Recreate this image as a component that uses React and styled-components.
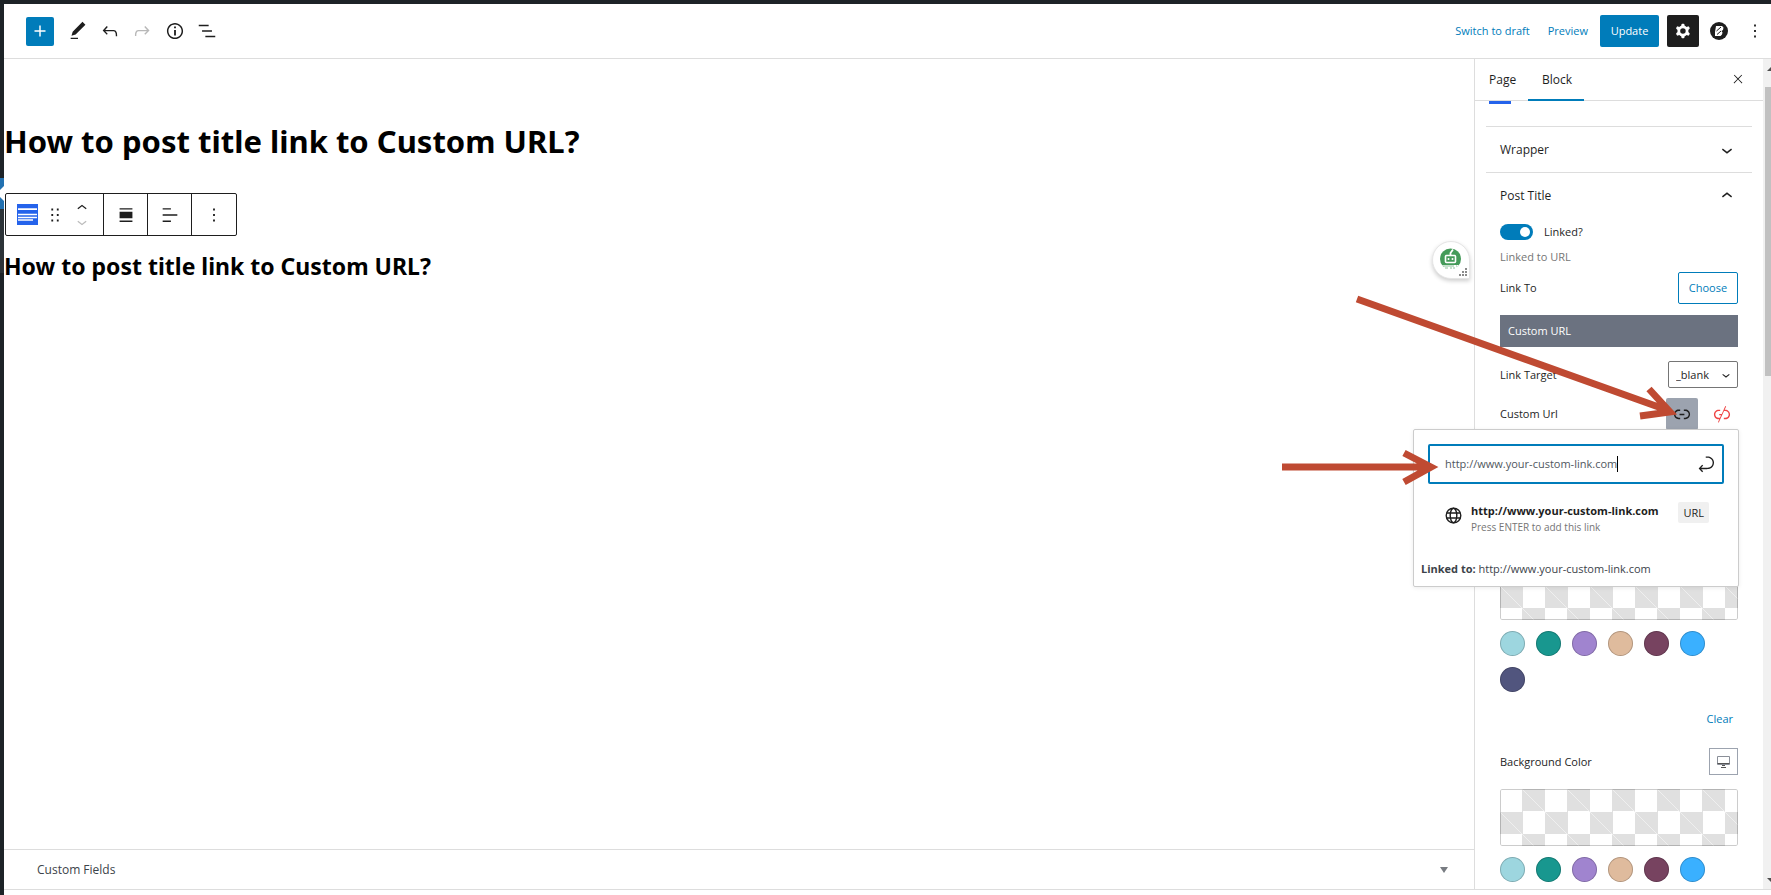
import React, { useState } from "react";
import styled, { createGlobalStyle } from "styled-components";

const blue = "#007cba";
const ink = "#1e1e1e";
const line = "#dddddd";

const GlobalStyle = createGlobalStyle`
  *, *::before, *::after { box-sizing: border-box; }
  body {
    margin: 0;
    background: #fff;
    color: ${ink};
    font: 11px/16px "Open Sans", "Noto Sans", sans-serif;
  }
  button, input, select { font: inherit; color: inherit; margin: 0; }
  h1, h2, p { margin: 0; }
`;

const Shell = styled.div`
  position: relative;
  display: flex;
  flex-direction: column;
  height: 100vh;
  overflow: hidden;
  border-top: 4px solid #1d2327;
`;

const Frame = styled.div`
  flex: 1;
  min-height: 0;
  display: flex;
`;

const AdminRail = styled.div`
  flex: none;
  width: 4px;
  background: #1d2327;
  display: flex;
  flex-direction: column;
`;

const RailCurrent = styled.svg`
  display: block;
  width: 4px;
  height: 31px;
  margin-top: 174px;
`;

const RailSubmenu = styled.div`
  height: 64px;
  background: #2c3338;
`;

const Main = styled.div`
  flex: 1;
  min-width: 0;
  display: flex;
  flex-direction: column;
  padding-bottom: 5px;
`;

const Header = styled.header`
  flex: none;
  height: 55px;
  display: flex;
  align-items: center;
  justify-content: space-between;
  border-bottom: 1px solid ${line};
  padding-left: 22px;
`;

const Tools = styled.div`
  display: flex;
  align-items: center;
  gap: ${(p) => p.$gap || 0}px;
`;

const IconButton = styled.button`
  flex: none;
  display: flex;
  align-items: center;
  justify-content: center;
  width: ${(p) => p.$w || 32}px;
  height: ${(p) => p.$h || 32}px;
  padding: 0;
  border: 0;
  border-radius: ${(p) => p.$radius || 0}px;
  background: ${(p) => p.$bg || "none"};
  color: ${(p) => p.$color || ink};
  & > svg { flex: none; }
`;

const TextLink = styled.a`
  color: ${blue};
  text-decoration: none;
`;

const HeaderActions = styled.div`
  display: flex;
  align-items: center;
`;

const HeaderLink = styled(TextLink)`
  margin-right: ${(p) => p.$after}px;
`;

const UpdateButton = styled.button`
  width: 59px;
  height: 32px;
  margin-right: 8px;
  padding: 0;
  border: 0;
  border-radius: 2px;
  background: ${blue};
  color: #fff;
`;

const Columns = styled.div`
  flex: 1;
  min-height: 0;
  display: flex;
  border-bottom: 1px solid ${line};
`;

const Editor = styled.main`
  position: relative;
  flex: 1;
  min-width: 0;
  display: flex;
  flex-direction: column;
`;

const Canvas = styled.div`
  flex: 1;
  padding-top: 60px;
  font-family: "Noto Sans", "Open Sans", sans-serif;
  color: #000;
`;

const PageTitle = styled.h1`
  font-size: 31px;
  line-height: 44px;
  font-weight: 700;
`;

const BlockTitle = styled.h2`
  margin-top: 14px;
  font-size: 23px;
  line-height: 32px;
  font-weight: 700;
`;

const BlockToolbar = styled.div`
  display: flex;
  width: max-content;
  height: 43px;
  margin: 30px 0 0 1px;
  border: 1px solid ${ink};
  border-radius: 2px;
`;

const ToolGroup = styled.div`
  display: flex;
  align-items: center;
  justify-content: center;
  width: ${(p) => p.$w}px;
  & + & { border-left: 1px solid ${ink}; }
`;

const Movers = styled.div`
  display: flex;
  flex-direction: column;
`;

const MetaBox = styled.button`
  display: flex;
  align-items: center;
  justify-content: space-between;
  height: 40px;
  padding: 0 26px 0 33px;
  border: 0;
  border-top: 1px solid ${line};
  background: #fff;
  color: #3c434a;
  font-size: 12px;
`;

const Assistant = styled.button`
  position: absolute;
  top: 182px;
  right: 4px;
  width: 38px;
  height: 38px;
  padding: 0;
  border: 1px solid #e6e6e6;
  border-radius: 19px 19px 0 19px;
  background: #fff;
  box-shadow: 0 2px 4px rgba(0, 0, 0, 0.2);
`;

const Sidebar = styled.aside`
  flex: none;
  width: 289px;
  border-left: 1px solid ${line};
  display: flex;
  flex-direction: column;
`;

const Tabs = styled.div`
  flex: none;
  display: flex;
  align-items: stretch;
  height: 42px;
  border-bottom: 1px solid ${line};
`;

const Tab = styled.button`
  height: 42px;
  padding: 0 14px;
  width: ${(p) => p.$w}px;
  border: 0;
  background: none;
  text-align: left;
  white-space: nowrap;
  font-size: 12px;
  box-shadow: ${(p) => (p.$active ? `inset 0 -2px 0 ${blue}` : "none")};
`;

const CloseSlot = styled.div`
  margin-left: auto;
  padding: 4px 9px 0 0;
`;

const Body = styled.div`
  flex: 1;
  min-height: 0;
  padding: 0 11px;
`;

const ScrolledTab = styled.div`
  width: 22px;
  height: 3px;
  margin: 0 0 22px 3px;
  background: #2563eb;
`;

const PanelToggle = styled.button`
  display: flex;
  align-items: center;
  justify-content: space-between;
  width: 100%;
  height: 46px;
  padding: 0 14px;
  border: 0;
  border-top: 1px solid ${line};
  background: none;
  font-size: 12px;
`;

const Controls = styled.div`
  position: relative;
  padding: 0 14px;
`;

const Row = styled.div`
  display: flex;
  align-items: center;
  justify-content: space-between;
  height: ${(p) => p.$h}px;
  margin-top: ${(p) => p.$top}px;
`;

const SwitchRow = styled.label`
  display: flex;
  align-items: center;
  gap: 11px;
  height: 20px;
  margin-top: 4px;
`;

const Switch = styled.input.attrs({ type: "checkbox" })`
  appearance: none;
  width: 33px;
  height: 16px;
  border-radius: 8px;
  background: #949494;
  display: flex;
  align-items: center;
  padding: 0 3px;
  &::before {
    content: "";
    width: 10px;
    height: 10px;
    border-radius: 50%;
    background: #fff;
  }
  &:checked { background: ${blue}; justify-content: flex-end; }
`;

const Help = styled.p`
  margin-top: 7px;
  color: #757575;
`;

const ChooseButton = styled.button`
  width: 60px;
  height: 32px;
  padding: 0;
  border: 1px solid ${blue};
  border-radius: 2px;
  background: #fff;
  color: ${blue};
`;

const Chosen = styled.div`
  height: 32px;
  margin-top: 11px;
  padding: 0 8px;
  line-height: 32px;
  background: #6b7280;
  color: #fff;
`;

const SelectWrap = styled.span`
  display: grid;
  width: 70px;
  height: 27px;
  align-items: center;
  justify-items: end;
  & > * { grid-area: 1 / 1; }
  & > svg { pointer-events: none; margin-right: 4px; }
`;

const Select = styled.select`
  appearance: none;
  width: 100%;
  height: 100%;
  padding: 0 7px;
  border: 1px solid #757575;
  border-radius: 2px;
  background: #fff;
`;

const Popover = styled.div`
  position: absolute;
  top: 207px;
  right: 13px;
  width: 326px;
  height: 158px;
  padding: 14px;
  border: 1px solid #cccccc;
  border-radius: 2px;
  background: #fff;
  box-shadow: 0 1px 4px rgba(0, 0, 0, 0.08);
`;

const UrlField = styled.label`
  display: flex;
  align-items: center;
  height: 40px;
  padding: 0 4px 0 15px;
  border: 2px solid ${blue};
  border-radius: 2px;
  color: #50575e;
  & > button { margin-left: auto; }
`;

const UrlInput = styled.input`
  field-sizing: content;
  padding: 0;
  border: 0;
  outline: 0;
  background: none;
`;

const Caret = styled.span`
  width: 1px;
  height: 16px;
  background: #000;
`;

const Suggestion = styled.button`
  display: flex;
  align-items: flex-start;
  width: 100%;
  margin-top: 18px;
  padding: 0 15px 0 17px;
  border: 0;
  background: none;
  text-align: left;
  & > svg { margin-top: 5px; }
`;

const SuggestionText = styled.span`
  flex: 1;
  margin-left: 9px;
  display: flex;
  flex-direction: column;
  font-weight: 700;
  padding-top: 1px;
`;

const SuggestionHint = styled.small`
  color: #757575;
  font-size: 10px;
  font-weight: 400;
`;

const Kind = styled.span`
  padding: 0 5px;
  border-radius: 2px;
  background: #f0f0f0;
  line-height: 21px;
`;

const LinkedTo = styled.p`
  margin: 26px 0 0 -7px;
  color: #3c434a;
`;

const Checker = styled.div`
  height: 57px;
  margin-top: ${(p) => p.$top}px;
  border-radius: 2px;
  box-shadow: inset 0 0 0 1px rgba(0, 0, 0, 0.2);
  background:
    linear-gradient(45deg, transparent 49%, #efefef 50%, transparent 51%) 22px 0 / 45px 45px,
    conic-gradient(#e0e0e0 25%, #fff 0 50%, #e0e0e0 0 75%, #fff 0) 0 0 / 45px 45px;
`;

const Swatches = styled.div`
  display: flex;
  flex-wrap: wrap;
  gap: 11px;
  margin-top: 11px;
`;

const Swatch = styled.button`
  width: 25px;
  height: 25px;
  padding: 0;
  border: 0;
  border-radius: 50%;
  background: ${(p) => p.$color};
  box-shadow: inset 0 0 0 1px rgba(0, 0, 0, 0.2);
`;

const ClearButton = styled.button`
  padding: 0 5px;
  border: 0;
  background: none;
  color: ${blue};
`;

const DeviceButton = styled(IconButton)`
  border: 1px solid #9ca3af;
`;

const Scrollbar = styled.div`
  flex: none;
  width: 8px;
  background: #f1f1f1;
  display: flex;
  flex-direction: column;
  align-items: flex-end;
  padding: 8px 0 7px;
`;

const Thumb = styled.div`
  width: 6px;
  height: 289px;
  margin: 16px 0 auto;
  background: #c1c1c1;
`;

const Annotations = styled.svg`
  position: absolute;
  top: 286px;
  right: 85px;
  pointer-events: none;
`;

const paths = {
  plus: "M18 11.2h-5.2V6h-1.6v5.2H6v1.6h5.2V18h1.6v-5.2H18z",
  edit: "M20.1 5.1L16.9 2 6.2 12.7l-1.3 4.4 4.5-1.3L20.1 5.1zM4 20.8h8v-1.5H4v1.5z",
  undo: "M18.3 11.7c-.6-.6-1.4-.9-2.3-.9H6.7l2.9-3.3-1.1-1-4.5 5L8.5 16l1-1-2.7-2.7H16c.5 0 .9.2 1.3.5 1 1 1 3.4 1 4.5v.3h1.5v-.2c0-1.5 0-4.3-1.5-5.7z",
  redo: "M15.6 6.5l-1.1 1 2.9 3.3H8c-.9 0-1.7.3-2.3.9-1.4 1.5-1.4 4.2-1.4 5.6v.2h1.5v-.3c0-1.1 0-3.5 1-4.5.3-.3.7-.5 1.3-.5h9.2L14.5 15l1.1 1.1 4.6-4.6-4.6-5z",
  info: "M12 3.2c-4.8 0-8.8 3.9-8.8 8.8 0 4.8 3.9 8.8 8.8 8.8 4.8 0 8.8-3.9 8.8-8.8 0-4.8-4-8.8-8.8-8.8zm0 16c-4 0-7.2-3.3-7.2-7.2C4.8 8 8 4.8 12 4.8s7.2 3.3 7.2 7.2c0 4-3.2 7.2-7.2 7.2zM11 17h2v-6h-2v6zm0-8h2V7h-2v2z",
  list: "M13.8 5.2H3v1.5h10.8V5.2zm-3.6 12v1.5H21v-1.5H10.2zm7.2-6H6.6v1.5h10.8v-1.5z",
  cog: "M10.289 4.836A1 1 0 0111.275 4h1.306a1 1 0 01.987.836l.244 1.466c.787.26 1.503.679 2.108 1.218l1.393-.522a1 1 0 011.216.437l.653 1.13a1 1 0 01-.23 1.273l-1.148.944a6.025 6.025 0 010 2.435l1.149.946a1 1 0 01.23 1.272l-.653 1.13a1 1 0 01-1.216.437l-1.394-.522c-.605.54-1.32.958-2.108 1.218l-.244 1.466a1 1 0 01-.987.836h-1.306a1 1 0 01-.986-.836l-.244-1.466a5.995 5.995 0 01-2.108-1.218l-1.394.522a1 1 0 01-1.217-.436l-.653-1.131a1 1 0 01.23-1.272l1.149-.946a6.026 6.026 0 010-2.435l-1.148-.944a1 1 0 01-.23-1.272l.653-1.131a1 1 0 011.217-.437l1.393.522a5.994 5.994 0 012.108-1.218l.244-1.466zM14.929 12a3 3 0 11-6 0 3 3 0 016 0z",
  more: "M13 19h-2v-2h2v2zm0-6h-2v-2h2v2zm0-6h-2V5h2v2z",
  down: "M17.5 11.6L12 16l-5.5-4.4.9-1.2L12 14l4.5-3.6 1 1.2z",
  up: "M6.5 12.4L12 8l5.5 4.4-.9 1.2L12 10l-4.5 3.6-1-1.2z",
  close: "M13 11.8l6.1-6.3-1-1-6.1 6.2-6.1-6.2-1 1 6.1 6.3-6.5 6.7 1 1 6.5-6.6 6.5 6.6 1-1z",
  drag: "M8 7h2V5H8v2zm0 6h2v-2H8v2zm0 6h2v-2H8v2zm6-14v2h2V5h-2zm0 8h2v-2h-2v2zm0 6h2v-2h-2v2z",
  alignBlock: "M5 4.5h14V6H5zM5 8.5h14v7H5zM5 18h14v1.5H5z",
  alignText: "M4 4.5h9V6H4zM4 11.2h16v1.5H4zM4 18h9v1.5H4z",
  link: "M15.6 7.2H14v1.5h1.6c2 0 3.7 1.7 3.7 3.7s-1.7 3.7-3.7 3.7H14v1.5h1.6c2.8 0 5.2-2.3 5.2-5.2 0-2.9-2.3-5.2-5.2-5.2zM4.7 12.4c0-2 1.7-3.7 3.7-3.7H10V7.2H8.4c-2.9 0-5.2 2.3-5.2 5.2 0 2.9 2.3 5.2 5.2 5.2H10v-1.5H8.4c-2 0-3.7-1.7-3.7-3.7zm4.6.9h5.3v-1.5H9.3v1.5z",
  unlink: "M15.6 7.3h-.7l1.6-3.5-.9-.4-3.9 8.5H9v1.5h2l-1.3 2.8H8.4c-2 0-3.7-1.7-3.7-3.7s1.7-3.7 3.7-3.7H10V7.3H8.4c-2.9 0-5.2 2.3-5.2 5.2 0 2.9 2.3 5.2 5.2 5.2H9l-1.4 3.2.9.4 5.7-12.5h1.4c2 0 3.7 1.7 3.7 3.7s-1.7 3.7-3.7 3.7H14v1.5h1.6c2.9 0 5.2-2.3 5.2-5.2 0-2.9-2.4-5.2-5.2-5.2z",
  enter: "M6.734 16.106l2.176-2.38-1.093-1.028-3.846 4.158 3.846 4.157 1.093-1.027-2.176-2.38h2.811c1.125 0 2.25.03 3.374 0 1.428-.001 3.362-.25 4.963-1.277 1.66-1.065 2.868-2.906 2.868-5.859 0-2.479-1.327-4.896-3.65-5.93-1.82-.813-3.044-.8-4.806-.788l-.567.002v1.5c.184 0 .368 0 .553-.002 1.82-.007 2.704-.014 4.21.657 1.854.827 2.76 2.657 2.76 4.561 0 2.472-.973 3.824-2.178 4.596-1.258.807-2.864 1.04-4.163 1.04h-.02c-1.115.03-2.229 0-3.344 0H6.734z",
};

const Icon = ({ name, size = 22 }) => (
  <svg width={size} height={size} viewBox="0 0 24 24" fill="currentColor" fillRule="evenodd" aria-hidden="true">
    <path d={paths[name]} />
  </svg>
);

const palette = [
  ["Aqua", "#9dd6df"],
  ["Teal", "#18978f"],
  ["Lavender", "#a084cf"],
  ["Sand", "#dfbb9d"],
  ["Plum", "#774360"],
  ["Sky", "#3ab0ff"],
  ["Indigo", "#51557e"],
];

const Palette = ({ colors }) => (
  <Swatches>
    {colors.map(([name, value]) => (
      <Swatch key={name} aria-label={name} $color={value} />
    ))}
  </Swatches>
);

const TopBar = () => (
  <Header>
    <Tools>
      <IconButton $w={28} $h={29} $radius={2} $bg={blue} $color="#fff" aria-label="Add block"><Icon name="plus" /></IconButton>
      <IconButton $w={48} aria-label="Edit"><Icon name="edit" /></IconButton>
      <IconButton $w={16} aria-label="Undo"><Icon name="undo" /></IconButton>
      <IconButton $w={48} $color="#b8b8b8" aria-label="Redo"><Icon name="redo" /></IconButton>
      <IconButton $w={18} aria-label="Details"><Icon name="info" /></IconButton>
      <IconButton $w={46} aria-label="List view"><Icon name="list" /></IconButton>
    </Tools>
    <HeaderActions>
      <HeaderLink href="#draft" $after={18}>Switch to draft</HeaderLink>
      <HeaderLink href="#preview" $after={12}>Preview</HeaderLink>
      <UpdateButton>Update</UpdateButton>
      <IconButton $bg={ink} $color="#fff" $radius={2} aria-label="Settings"><Icon name="cog" /></IconButton>
      <IconButton $w={40} aria-label="Blocks plugin">
        <svg width="18" height="18" viewBox="0 0 18 18" aria-hidden="true">
          <circle cx="9" cy="9" r="9" fill={ink} />
          <path d="M6 4h6l1.500 1.500-.5 2.500-1.500 1 1 1.500-.5 2L10.500 14H5V10z" fill="#fff" />
          <path d="M6.500 9L11 5M7 12.500L11 9" stroke={ink} strokeWidth="1" />
        </svg>
      </IconButton>
      <IconButton $w={32} aria-label="Options"><Icon name="more" /></IconButton>
    </HeaderActions>
  </Header>
);

const Toolbar = () => (
  <BlockToolbar role="toolbar" aria-label="Block tools">
    <ToolGroup $w={97}>
      <IconButton $w={28} aria-label="Post title">
        <svg width="21" height="21" viewBox="0 0 21 21" aria-hidden="true">
          <rect width="21" height="21" fill="#2563eb" />
          <path d="M1 5h19M1 10.500h19M1 13.500h19M1 16h15" stroke="#fff" strokeWidth="1.400" />
          <path d="M1 5.500h19" stroke="#fff" />
        </svg>
      </IconButton>
      <IconButton $w={26} aria-label="Drag"><Icon name="drag" /></IconButton>
      <Movers>
        <IconButton $w={28} $h={14} aria-label="Move up"><Icon name="up" size={20} /></IconButton>
        <IconButton $w={28} $h={14} $color="#bbb" aria-label="Move down"><Icon name="down" size={20} /></IconButton>
      </Movers>
    </ToolGroup>
    <ToolGroup $w={44}><IconButton aria-label="Align"><Icon name="alignBlock" /></IconButton></ToolGroup>
    <ToolGroup $w={44}><IconButton aria-label="Text align"><Icon name="alignText" /></IconButton></ToolGroup>
    <ToolGroup $w={45}><IconButton aria-label="Options"><Icon name="more" /></IconButton></ToolGroup>
  </BlockToolbar>
);

const Robot = () => (
  <svg width="36" height="36" viewBox="0 0 36 36" aria-hidden="true">
    <circle cx="17.500" cy="17" r="10.500" fill="#459b5a" />
    <path d="M17.500 13v-2l2.500-3.500" stroke="#fff" strokeWidth="1.800" fill="none" />
    <rect x="12.500" y="13.500" width="10" height="7" rx="1" fill="none" stroke="#fff" strokeWidth="1.600" />
    <circle cx="15.500" cy="17" r="1" fill="#fff" />
    <circle cx="19.500" cy="17" r="1" fill="#fff" />
    <path d="M9 23h17l-4 5h-9z" fill="#fff" />
    <path d="M10 24h11m2 0h1M12 26h3m2 0h2m1 0h2" stroke="#8cc29a" />
    <path d="M32 26h2v2h-2zM29 29h2v2h-2zM32 29h2v2h-2zM26 32h2v2h-2zM29 32h2v2h-2zM32 32h2v2h-2z" fill="#8b8b8b" />
  </svg>
);

const LinkPopover = ({ url, setUrl }) => (
  <Popover role="dialog" aria-label="Edit link">
    <UrlField>
      <UrlInput aria-label="URL" value={url} onChange={(e) => setUrl(e.target.value)} />
      <Caret />
      <IconButton $w={24} $h={24} aria-label="Submit"><Icon name="enter" size={22} /></IconButton>
    </UrlField>
    <Suggestion>
      <svg width="17" height="17" viewBox="0 0 17 17" fill="none" stroke={ink} strokeWidth="1.400" aria-hidden="true">
        <circle cx="8.500" cy="8.500" r="7.300" />
        <ellipse cx="8.500" cy="8.500" rx="3.300" ry="7.300" />
        <path d="M1.800 6h13.400M1.800 11h13.400" />
      </svg>
      <SuggestionText>
        {url}
        <SuggestionHint>Press ENTER to add this link</SuggestionHint>
      </SuggestionText>
      <Kind>URL</Kind>
    </Suggestion>
    <LinkedTo><b>Linked to:</b> {url}</LinkedTo>
  </Popover>
);

const Settings = () => {
  const [url, setUrl] = useState("http://www.your-custom-link.com");
  const [linked, setLinked] = useState(true);
  return (
    <Sidebar>
      <Tabs>
        <Tab $w={53}>Page</Tab>
        <Tab $w={56} $active>Block</Tab>
        <CloseSlot><IconButton aria-label="Close settings"><Icon name="close" size={14} /></IconButton></CloseSlot>
      </Tabs>
      <Body>
        <ScrolledTab />
        <PanelToggle>Wrapper<Icon name="down" /></PanelToggle>
        <PanelToggle aria-expanded="true">Post Title<Icon name="up" /></PanelToggle>
        <Controls>
          <SwitchRow>
            <Switch checked={linked} onChange={(e) => setLinked(e.target.checked)} />
            Linked?
          </SwitchRow>
          <Help>Linked to URL</Help>
          <Row $h={32} $top={7}>Link To<ChooseButton>Choose</ChooseButton></Row>
          <Chosen>Custom URL</Chosen>
          <Row $h={27} $top={14}>
            <label htmlFor="target">Link Target</label>
            <SelectWrap>
              <Select id="target" defaultValue="_blank"><option>_blank</option><option>_self</option></Select>
              <Icon name="down" size={16} />
            </SelectWrap>
          </Row>
          <Row $h={32} $top={10}>
            Custom Url
            <Tools $gap={8}>
              <IconButton $bg="#9ca3af" $radius={2} aria-label="Edit link"><Icon name="link" /></IconButton>
              <IconButton $color="#ef4444" aria-label="Remove link"><Icon name="unlink" /></IconButton>
            </Tools>
          </Row>
          <Checker $top={133} />
          <Palette colors={palette} />
          <Row $h={18} $top={18}><span /><ClearButton>Clear</ClearButton></Row>
          <Row $h={27} $top={20}>
            Background Color
            <DeviceButton $w={29} $h={27} aria-label="Desktop">
              <svg width="13" height="12" viewBox="0 0 13 12" fill="none" aria-hidden="true">
                <path d="M.5.5h12v8H.5z" stroke="#8a8f98" />
                <path d="M.5 7.500h12M4 11.500h5M5 9.500h3" stroke="#555" />
              </svg>
            </DeviceButton>
          </Row>
          <Checker $top={14} />
          <Palette colors={palette.slice(0, 6)} />
          <LinkPopover url={url} setUrl={setUrl} />
        </Controls>
      </Body>
    </Sidebar>
  );
};

export default function App() {
  return (
    <Shell>
      <GlobalStyle />
      <Frame>
        <AdminRail>
          <RailCurrent viewBox="0 0 4 31" aria-hidden="true">
            <path d="M0 0h4v31H0z" fill="#2271b1" />
            <path d="M4 8v15L0 19v-7z" fill="#fff" />
          </RailCurrent>
          <RailSubmenu />
        </AdminRail>
        <Main>
          <TopBar />
          <Columns>
            <Editor>
              <Canvas>
                <PageTitle>How to post title link to Custom URL?</PageTitle>
                <Toolbar />
                <BlockTitle>How to post title link to Custom URL?</BlockTitle>
              </Canvas>
              <MetaBox>
                Custom Fields
                <svg width="8" height="6" viewBox="0 0 8 6" aria-hidden="true"><path d="M0 0h8L4 6z" fill="#787c82" /></svg>
              </MetaBox>
              <Assistant aria-label="Writing assistant"><Robot /></Assistant>
            </Editor>
            <Settings />
            <Scrollbar aria-hidden="true">
              <svg width="4" height="4" viewBox="0 0 4 4"><path d="M0 4l4-4v4z" fill="#505050" /></svg>
              <Thumb />
              <svg width="4" height="4" viewBox="0 0 4 4"><path d="M0 0h4v4z" fill="#505050" /></svg>
            </Scrollbar>
          </Columns>
        </Main>
      </Frame>
      <Annotations width="406" height="200" viewBox="1280 290 406 200" fill="none" stroke="#bf4a32" strokeWidth="7" aria-hidden="true">
        <path d="M1357 299L1667 410M1649 389L1670 412L1640 416" />
        <path d="M1282 467H1431M1404 453L1431 467L1404 482" />
      </Annotations>
    </Shell>
  );
}
